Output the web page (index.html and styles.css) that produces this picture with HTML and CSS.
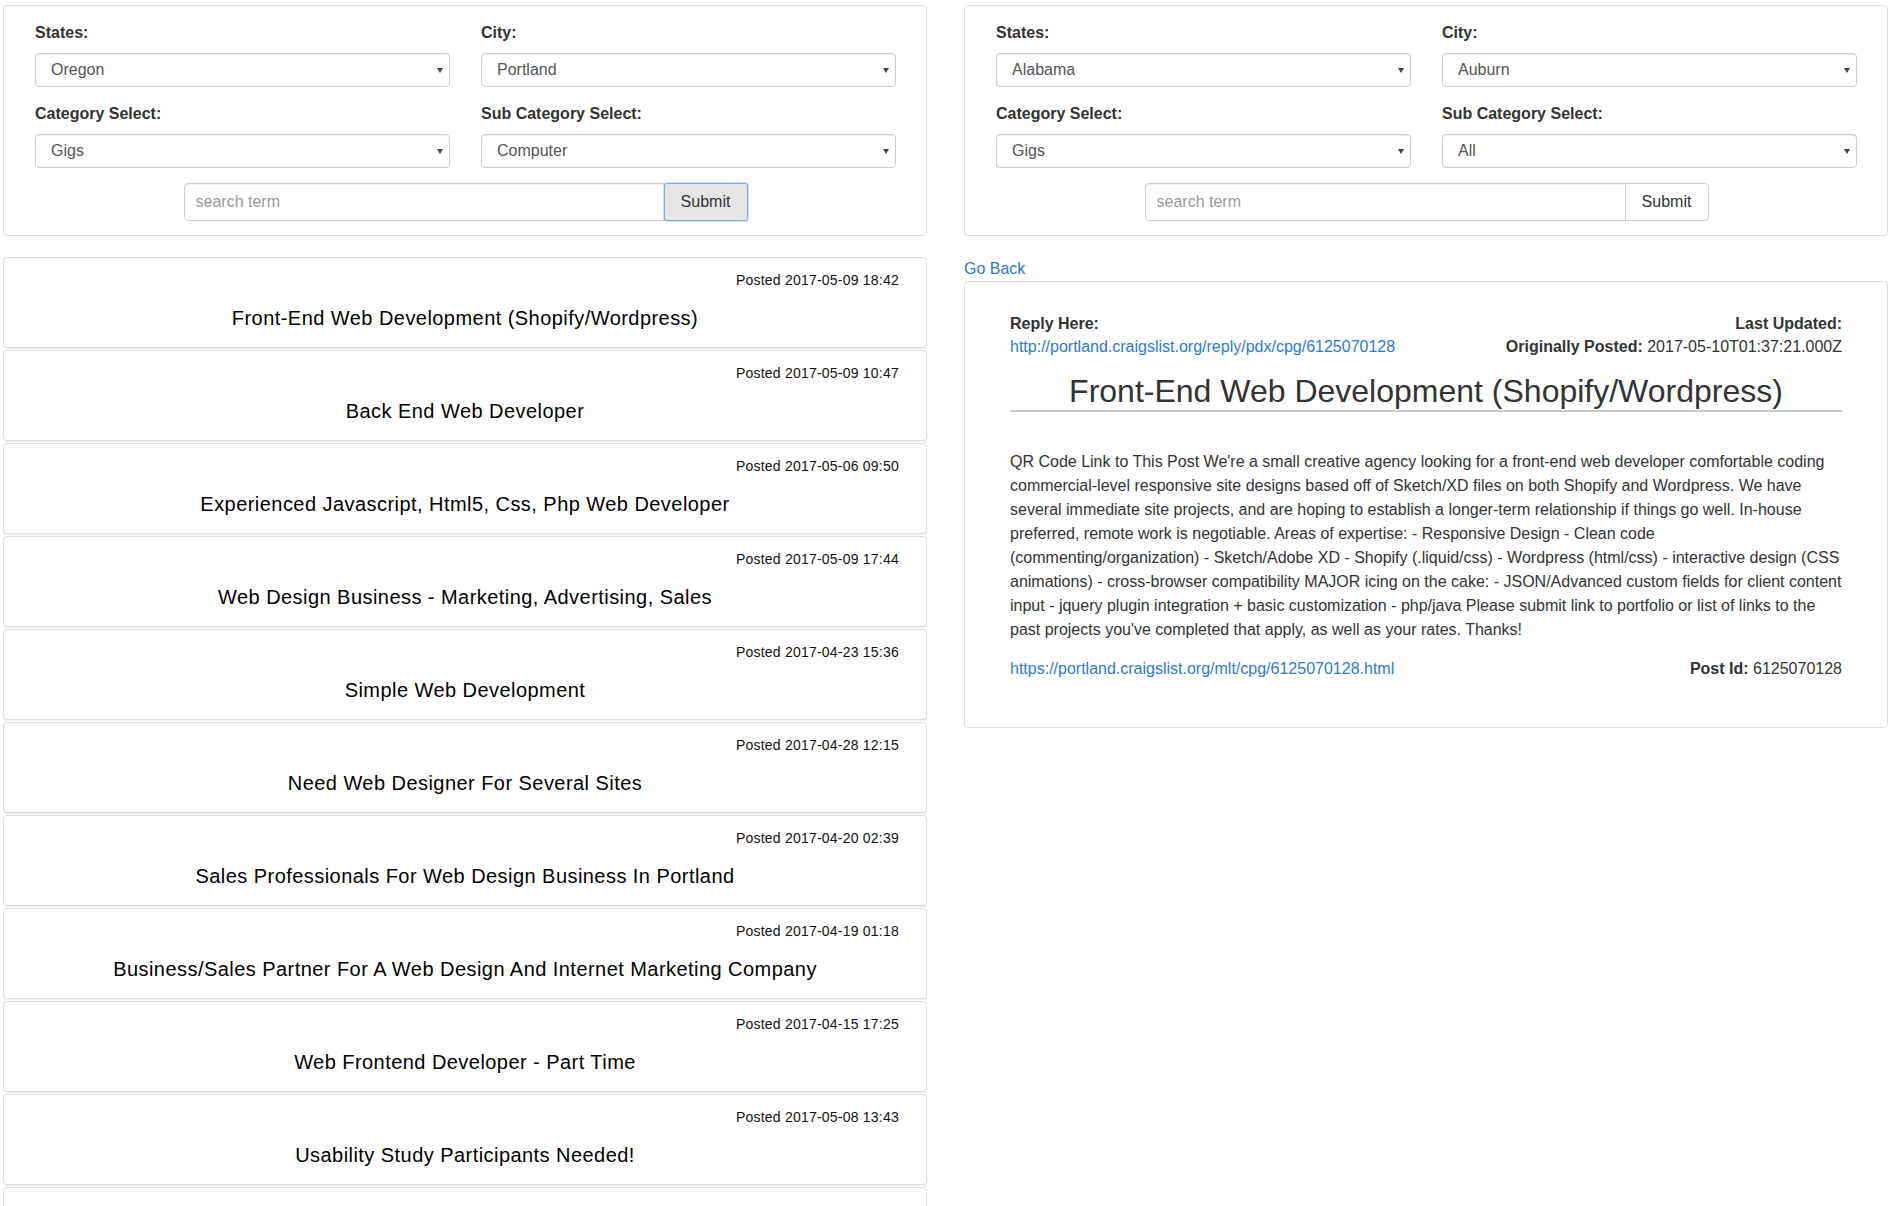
FILE: index.html
```html
<!DOCTYPE html>
<html lang="en">
<head>
<meta charset="utf-8">
<title>Craigslist Gigs Search</title>
<link rel="stylesheet" href="styles.css">
</head>
<body>
<div class="layout">
  <section class="column">
    <form class="search-panel">
      <div class="filters">
        <div class="field">
          <label>States:</label>
          <div class="select"><select><option>Oregon</option></select></div>
        </div>
        <div class="field">
          <label>City:</label>
          <div class="select"><select><option>Portland</option></select></div>
        </div>
        <div class="field">
          <label>Category Select:</label>
          <div class="select"><select><option>Gigs</option></select></div>
        </div>
        <div class="field">
          <label>Sub Category Select:</label>
          <div class="select"><select><option>Computer</option></select></div>
        </div>
      </div>
      <div class="search">
        <input type="text" placeholder="search term">
        <button type="button" class="btn is-focused">Submit</button>
      </div>
    </form>

    <div class="listing">
      <div class="post"><div class="post-date">Posted 2017-05-09 18:42</div><h4 class="post-title">Front-End Web Development (Shopify/Wordpress)</h4></div>
      <div class="post"><div class="post-date">Posted 2017-05-09 10:47</div><h4 class="post-title">Back End Web Developer</h4></div>
      <div class="post"><div class="post-date">Posted 2017-05-06 09:50</div><h4 class="post-title">Experienced Javascript, Html5, Css, Php Web Developer</h4></div>
      <div class="post"><div class="post-date">Posted 2017-05-09 17:44</div><h4 class="post-title">Web Design Business - Marketing, Advertising, Sales</h4></div>
      <div class="post"><div class="post-date">Posted 2017-04-23 15:36</div><h4 class="post-title">Simple Web Development</h4></div>
      <div class="post"><div class="post-date">Posted 2017-04-28 12:15</div><h4 class="post-title">Need Web Designer For Several Sites</h4></div>
      <div class="post"><div class="post-date">Posted 2017-04-20 02:39</div><h4 class="post-title">Sales Professionals For Web Design Business In Portland</h4></div>
      <div class="post"><div class="post-date">Posted 2017-04-19 01:18</div><h4 class="post-title">Business/Sales Partner For A Web Design And Internet Marketing Company</h4></div>
      <div class="post"><div class="post-date">Posted 2017-04-15 17:25</div><h4 class="post-title">Web Frontend Developer - Part Time</h4></div>
      <div class="post"><div class="post-date">Posted 2017-05-08 13:43</div><h4 class="post-title">Usability Study Participants Needed!</h4></div>
      <div class="post"></div>
    </div>
  </section>

  <section class="column">
    <form class="search-panel">
      <div class="filters">
        <div class="field">
          <label>States:</label>
          <div class="select"><select><option>Alabama</option></select></div>
        </div>
        <div class="field">
          <label>City:</label>
          <div class="select"><select><option>Auburn</option></select></div>
        </div>
        <div class="field">
          <label>Category Select:</label>
          <div class="select"><select><option>Gigs</option></select></div>
        </div>
        <div class="field">
          <label>Sub Category Select:</label>
          <div class="select"><select><option>All</option></select></div>
        </div>
      </div>
      <div class="search">
        <input type="text" placeholder="search term">
        <button type="button" class="btn">Submit</button>
      </div>
    </form>

    <a class="go-back" href="#">Go Back</a>

    <article class="detail">
      <div class="detail-head">
        <div class="head-col">
          <div><b>Reply Here:</b></div>
          <div><a href="#">http://portland.craigslist.org/reply/pdx/cpg/6125070128</a></div>
        </div>
        <div class="head-col dates">
          <div><b>Last Updated:</b></div>
          <div><b>Originally Posted:</b> 2017-05-10T01:37:21.000Z</div>
        </div>
      </div>
      <h2 class="detail-title">Front-End Web Development (Shopify/Wordpress)</h2>
      <p class="detail-body">QR Code Link to This Post We're a small creative agency looking for a front-end web developer comfortable coding commercial-level responsive site designs based off of Sketch/XD files on both Shopify and Wordpress. We have several immediate site projects, and are hoping to establish a longer-term relationship if things go well. In-house preferred, remote work is negotiable. Areas of expertise: - Responsive Design - Clean code (commenting/organization) - Sketch/Adobe XD - Shopify (.liquid/css) - Wordpress (html/css) - interactive design (CSS animations) - cross-browser compatibility MAJOR icing on the cake: - JSON/Advanced custom fields for client content input - jquery plugin integration + basic customization - php/java Please submit link to portfolio or list of links to the past projects you've completed that apply, as well as your rates. Thanks!</p>
      <div class="detail-foot">
        <a href="#">https://portland.craigslist.org/mlt/cpg/6125070128.html</a>
        <div><b>Post Id:</b> 6125070128</div>
      </div>
    </article>
  </section>
</div>
</body>
</html>
```

FILE: styles.css
```css
* {
  box-sizing: border-box;
}

body {
  margin: 0;
  font-family: "Liberation Sans", Arial, Helvetica, sans-serif;
  font-size: 16px;
  line-height: 20px;
  color: #333;
  background: #fff;
}

a {
  color: #2f7ad0;
  text-decoration: none;
}

.layout {
  display: grid;
  grid-template-columns: 924px 924px;
  column-gap: 37px;
  align-items: start;
  padding: 5px 0 0 3px;
}

.column {
  display: flex;
  flex-direction: column;
}

/* search panel */
.search-panel {
  margin: 0;
  border: 1px solid #ddd;
  border-radius: 4px;
  padding: 16px 30px 14px 31px;
  background: #fff;
}

.filters {
  display: grid;
  grid-template-columns: 1fr 1fr;
  column-gap: 31px;
  row-gap: 16px;
}

.field label {
  display: block;
  font-weight: bold;
  line-height: 21px;
  margin-bottom: 10px;
}

.select {
  position: relative;
}

.select select {
  -webkit-appearance: none;
  appearance: none;
  display: block;
  width: 100%;
  height: 34px;
  margin: 0;
  padding: 0 24px 0 15px;
  border: 1px solid #ccc;
  border-radius: 4px;
  background: #fff;
  color: #555;
  font: inherit;
  box-shadow: inset 0 1px 1px rgba(0, 0, 0, 0.075);
}

.select::after {
  content: "";
  position: absolute;
  right: 7px;
  top: 15px;
  border-left: 3px solid transparent;
  border-right: 3px solid transparent;
  border-top: 5px solid #444;
  pointer-events: none;
}

.search {
  display: flex;
  width: 564px;
  height: 38px;
  margin: 15px auto 0;
}

.search input {
  flex: 1;
  min-width: 0;
  height: 38px;
  margin: 0;
  padding: 0 11px;
  border: 1px solid #ccc;
  border-radius: 4px 0 0 4px;
  font: inherit;
  color: #555;
  box-shadow: inset 0 1px 1px rgba(0, 0, 0, 0.075);
}

.search input::placeholder {
  color: #999;
}

.btn {
  width: 84px;
  height: 38px;
  margin: 0 0 0 -1px;
  padding: 0;
  border: 1px solid #ccc;
  border-radius: 0 4px 4px 0;
  background: #fff;
  color: #333;
  font: inherit;
}

.btn.is-focused {
  background: #e6e6e6;
  border-color: #7ea6e6;
  box-shadow: 0 0 0 1px rgba(126, 166, 230, 0.35);
  border-radius: 3px;
}

/* listing */
.listing {
  margin-top: 21px;
}

.post {
  height: 91px;
  margin-bottom: 2px;
  padding: 12px 27px 0;
  border: 1px solid #ddd;
  border-radius: 4px;
  background: #fff;
  box-shadow: 0 1px 1px rgba(0, 0, 0, 0.08);
}

.post-date {
  font-size: 14px;
  letter-spacing: 0.22px;
  text-align: right;
  color: #111;
}

.post-title {
  margin: 17px 0 0;
  font-size: 20px;
  letter-spacing: 0.45px;
  line-height: 22px;
  font-weight: normal;
  text-align: center;
  color: #000;
}

/* detail */
.go-back {
  display: block;
  align-self: flex-start;
  margin-top: 23px;
  line-height: 20px;
}

.detail {
  margin-top: 2px;
  padding: 32px 45px 48px;
  border: 1px solid #ddd;
  border-radius: 4px;
  background: #fff;
}

.detail-head {
  display: flex;
  justify-content: space-between;
}

.head-col > div + div {
  margin-top: 3px;
}

.dates {
  text-align: right;
}

.detail-title {
  margin: 17px 0 0;
  padding-bottom: 1px;
  font-size: 32px;
  line-height: 35px;
  font-weight: normal;
  text-align: center;
  color: #333;
  border-bottom: 2px solid #ccc;
}

.detail-body {
  margin: 38px 0 0;
  line-height: 24px;
}

.detail-foot {
  display: flex;
  justify-content: space-between;
  margin-top: 17px;
}
```
